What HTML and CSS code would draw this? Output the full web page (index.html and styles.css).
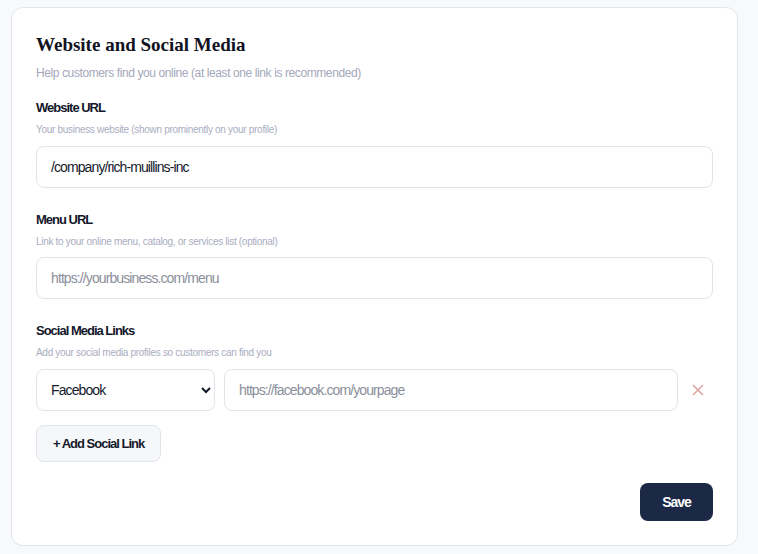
FILE: index.html
```html
<!DOCTYPE html>
<html lang="en">

<head>
    <meta charset="UTF-8">
    <title>Website and Social Media</title>
    <link rel="stylesheet" href="styles.css">
</head>

<body>
    <div class="card">
        <h2 class="card-title">Website and Social Media</h2>
        <p class="card-subtitle">Help customers find you online (at least one link is recommended)</p>

        <!-- Сайт -->
        <div class="field">
            <label class="field-label" for="websiteUrl">Website URL</label>
            <div class="field-hint">Your business website (shown prominently on your profile)</div>
            <input type="text" id="websiteUrl" class="text-input" value="/company/rich-muillins-inc">
        </div>

        <!-- Меню -->
        <div class="field">
            <label class="field-label" for="menuUrl">Menu URL</label>
            <div class="field-hint">Link to your online menu, catalog, or services list (optional)</div>
            <input type="text" id="menuUrl" class="text-input" placeholder="https://yourbusiness.com/menu">
        </div>

        <!-- Соцсети -->
        <div class="field">
            <div class="field-label">Social Media Links</div>
            <div class="field-hint">Add your social media profiles so customers can find you</div>
            <div class="social-row">
                <select class="social-select">
                    <option>Facebook</option>
                    <option>Instagram</option>
                    <option>Twitter</option>
                    <option>LinkedIn</option>
                </select>
                <input type="text" class="text-input social-input" placeholder="https://facebook.com/yourpage">
                <button class="remove-button" title="Remove">
                    <svg width="12" height="12" viewBox="0 0 12 12">
                        <path d="M1 1 L11 11 M11 1 L1 11" stroke="#dca2a2" stroke-width="1.5" fill="none" />
                    </svg>
                </button>
            </div>
            <button class="button add-button">+ Add Social Link</button>
        </div>

        <div class="actions">
            <button class="button save-button">Save</button>
        </div>
    </div>
</body>

</html>
```

FILE: styles.css
```css
html,
body {
    margin: 0;
    font-family: "Liberation Sans", Arial, sans-serif;
}

body {
    background: #f8f9fb;
    padding: 7px 20px 8px 11px;
}

.card {
    background: #fff;
    border: 1px solid #e3e5ec;
    border-radius: 12px;
    padding: 24px;
}

.card-title {
    margin: 0;
    font-family: "Liberation Serif", serif;
    font-size: 19px;
    line-height: 26px;
    font-weight: bold;
    color: #111322;
}

.card-subtitle {
    margin: 6px 0 0;
    font-size: 12px;
    line-height: 18px;
    letter-spacing: -0.4px;
    color: #a4a8ba;
}

.field {
    margin-top: 16px;
}

.field + .field {
    margin-top: 22px;
}

.field-label {
    display: block;
    font-size: 13px;
    line-height: 20px;
    font-weight: bold;
    letter-spacing: -1px;
    color: #13172a;
}

.field-hint {
    margin-top: 4px;
    margin-bottom: 8px;
    font-size: 10px;
    line-height: 16px;
    letter-spacing: -0.3px;
    color: #a9adc0;
}

.text-input {
    display: block;
    width: 100%;
    height: 42px;
    padding: 0 14px;
    border: 1px solid #e2e4eb;
    border-radius: 8px;
    font-family: inherit;
    font-size: 14px;
    letter-spacing: -0.9px;
    color: #151a2c;
    background: #fff;
    box-sizing: border-box;
    outline: none;
}

.field + .field .text-input {
    margin-top: -1px;
}

.text-input::placeholder {
    color: #8b8f9b;
}

.social-row {
    display: flex;
    align-items: center;
    gap: 9px;
}

.social-select {
    width: 179px;
    height: 42px;
    padding: 0 8px 0 10px;
    border: 1px solid #e2e4eb;
    border-radius: 8px;
    font-family: inherit;
    font-size: 14px;
    letter-spacing: -0.9px;
    color: #151a2c;
    background: #fff;
    box-sizing: border-box;
    flex-shrink: 0;
}

.social-input {
    flex: 1;
    width: auto;
}

.field + .field .social-input {
    margin-top: 0;
}

.remove-button {
    width: 26px;
    height: 34px;
    border: none;
    background: none;
    padding: 0 4px 0 0;
    display: flex;
    justify-content: center;
    align-items: center;
    cursor: pointer;
    flex-shrink: 0;
}

.button {
    height: 37px;
    padding: 0 16px;
    font-family: inherit;
    font-size: 13px;
    font-weight: bold;
    letter-spacing: -1px;
    border-radius: 8px;
    cursor: pointer;
}

.add-button {
    margin-top: 14px;
    background: #f6f7f9;
    border: 1px solid #e2e4eb;
    color: #151a2c;
}

.actions {
    display: flex;
    justify-content: flex-end;
    margin-top: 21px;
}

.save-button {
    width: 73px;
    height: 38px;
    background: #1b2846;
    border: none;
    color: #fff;
    font-size: 14px;
}
```
